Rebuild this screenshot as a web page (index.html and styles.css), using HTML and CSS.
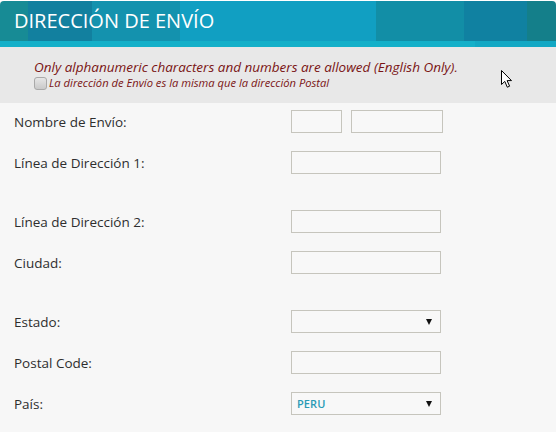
FILE: index.html
```html
<!DOCTYPE html>
<html lang="es">
<head>
<meta charset="utf-8">
<title>Dirección de Envío</title>
<link rel="stylesheet" href="styles.css">
</head>
<body>
<div class="page">
  <div class="header">
    <h1 class="title">DIRECCIÓN DE ENVÍO</h1>
  </div>
  <div class="strip"></div>
  <div class="notice">
    <p class="warn">Only alphanumeric characters and numbers are allowed (English Only).</p>
    <label class="same"><span class="check"></span><span>La dirección de Envío es la misma que la dirección Postal</span></label>
  </div>
  <form class="form">
    <div class="row">
      <label class="lbl">Nombre de Envío:</label>
      <div class="ctrl"><input class="inp short" type="text"><input class="inp mid" type="text"></div>
    </div>
    <div class="row gap">
      <label class="lbl">Línea de Dirección 1:</label>
      <div class="ctrl"><input class="inp" type="text"></div>
    </div>
    <div class="row">
      <label class="lbl">Línea de Dirección 2:</label>
      <div class="ctrl"><input class="inp" type="text"></div>
    </div>
    <div class="row gap">
      <label class="lbl">Ciudad:</label>
      <div class="ctrl"><input class="inp" type="text"></div>
    </div>
    <div class="row">
      <label class="lbl">Estado:</label>
      <div class="ctrl"><div class="sel"><span class="val"></span><span class="caret"></span></div></div>
    </div>
    <div class="row">
      <label class="lbl">Postal Code:</label>
      <div class="ctrl"><input class="inp" type="text"></div>
    </div>
    <div class="row">
      <label class="lbl">País:</label>
      <div class="ctrl"><div class="sel"><span class="val">PERU</span><span class="caret"></span></div></div>
    </div>
  </form>
  <svg class="cursor" width="13" height="20" viewBox="0 0 13 20"><path d="M1.5 1.5 L1.5 15.5 L4.8 12.4 L7.3 18.2 L9.6 17.2 L7.1 11.6 L11.5 11.6 Z" fill="#fff" stroke="#000" stroke-width="1" stroke-linejoin="miter"/></svg>
</div>
</body>
</html>
```
FILE: styles.css
```css
* { box-sizing: border-box; }
html, body { margin: 0; padding: 0; background: #ffffff; }
.page {
  position: relative;
  width: 556px;
  height: 432px;
  padding-top: 1px;
  background: #f7f7f7;
  font-family: "Open Sans", "DejaVu Sans", sans-serif;
  overflow: hidden;
}
.page::before {
  content: "";
  position: absolute;
  left: 0; top: 0; right: 0; height: 1px;
  background: #ffffff;
}
.header {
  height: 40px;
  border-radius: 4px 4px 0 0;
  background: linear-gradient(to right,
    #178b95 0, #178b95 28px,
    #12809f 28px, #12809f 92px,
    #1492ae 92px, #1492ae 180px,
    #119fc2 180px, #119fc2 376px,
    #128ea6 376px, #128ea6 464px,
    #1081a1 464px, #1081a1 527px,
    #147f8a 527px, #147f8a 556px);
  display: flex;
  align-items: center;
  padding-left: 14px;
}
.title {
  margin: 0;
  color: #ffffff;
  font-weight: 400;
  font-size: 20px;
  line-height: 1;
}
.strip {
  height: 6px;
  background: linear-gradient(to right, #14b0c9 0, #14b0c9 475px, #12a8c4 475px, #12a8c4 556px);
}
.notice {
  background: #e8e8e8;
  height: 56px;
  padding: 11px 0 0 34px;
  color: #7a1414;
  font-style: italic;
}
.warn {
  margin: 0;
  font-size: 13.5px;
  line-height: 18px;
}
.same {
  display: flex;
  align-items: center;
  gap: 2px;
  font-size: 11.2px;
  line-height: 14px;
}
.check {
  width: 13px;
  height: 13px;
  border: 1px solid #a9a9a9;
  border-radius: 3px;
  background: linear-gradient(#e6e6e6, #c9c9c9);
  flex: none;
}
.form {
  padding: 7px 0 0 14px;
}
.row {
  display: flex;
  align-items: center;
  height: 23px;
  margin-bottom: 18px;
}
.row.gap { margin-bottom: 36px; }
.lbl {
  width: 277px;
  font-size: 13.5px;
  color: #2e2e2e;
}
.ctrl {
  display: flex;
  gap: 9px;
}
.inp {
  width: 150px;
  height: 23px;
  border: 1px solid #c6c5bd;
  background: #f8f8f8;
  margin: 0;
  padding: 0 4px;
  border-radius: 0;
  outline: none;
}
.inp.short { width: 51px; }
.inp.mid { width: 92px; }
.sel {
  width: 150px;
  height: 23px;
  border: 1px solid #c6c5bd;
  background: #f8f8f8;
  display: flex;
  align-items: center;
  justify-content: space-between;
  padding: 0 8px 0 5px;
}
.val {
  font-size: 11px;
  font-weight: 600;
  color: #2b9bb5;
  letter-spacing: 0.1px;
}
.caret {
  width: 0; height: 0;
  border-left: 3px solid transparent;
  border-right: 3px solid transparent;
  border-top: 6px solid #111111;
}
.cursor {
  position: absolute;
  left: 500px;
  top: 69px;
}
```
